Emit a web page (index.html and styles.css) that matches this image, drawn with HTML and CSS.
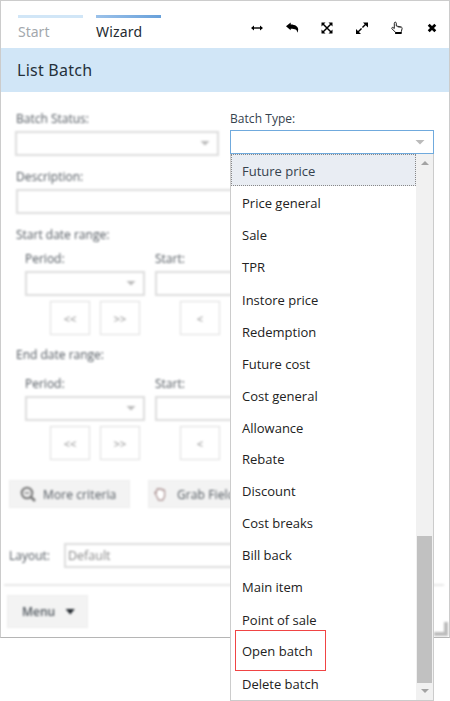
FILE: index.html
```html
<!DOCTYPE html>
<html lang="en">
<head>
<meta charset="utf-8">
<title>List Batch</title>
<link rel="stylesheet" href="styles.css">
</head>
<body>
<main class="panel">
  <header class="topbar">
    <nav class="tabs">
      <span class="tab">Start</span>
      <span class="tab active">Wizard</span>
    </nav>
    <div class="tools">
      <svg viewBox="0 0 14 14"><path d="M3 7h8" stroke="#000" stroke-width="1.4"/><path d="M1 7l3-2.400v4.800zM13 7l-3-2.400v4.800z"/></svg>
      <svg viewBox="0 0 14 14"><path d="M1 5.300L5.700 1.400v2.100c4.700 0 7.500 2.200 7.500 5.100 0 1.300-.4 2.400-1 3.200.1-3.200-2-4-6.500-4v1.500z"/></svg>
      <svg viewBox="0 0 14 14"><path d="M3 3l8 8M11 3l-8 8" stroke="#000" stroke-width="1.500"/><path d="M1.500 1.500h4l-4 4zM12.500 1.500v4l-4-4zM1.500 12.500v-4l4 4zM12.500 12.500h-4l4-4z"/></svg>
      <svg viewBox="0 0 14 14"><path d="M3 11l8-8" stroke="#000" stroke-width="1.400" stroke-dasharray="5 1.300"/><path d="M8 1.500h5v5zM1 8v5h5z"/></svg>
      <svg viewBox="0 0 14 14"><path d="M4.300 7.500V2.200c0-1.400 2-1.400 2 0V5l4.700.9c.9.300 1.200.8 1.100 1.600l-.8 3.200v1.800H5.500v-1.200L2 7.800c-.7-1 .2-1.700 1-1.300zM8.300 5.500v1M10 6v1" fill="none" stroke="#222" stroke-width="1"/><path d="M5.300 11h6v2h-6z"/></svg>
      <svg viewBox="0 0 14 14"><path d="M3.700 3.700l6.600 6.600M10.300 3.700l-6.600 6.600" stroke="#000" stroke-width="2.700"/></svg>
    </div>
  </header>
  <h1 class="title">List Batch</h1>
  <div class="form">
    <section class="status">
      <div class="label">Batch Status:</div>
      <div class="field select"></div>
    </section>
    <section class="description">
      <div class="label">Description:</div>
      <div class="field"></div>
    </section>
    <section class="range">
      <div class="label">Start date range:</div>
      <div class="pair">
        <div class="col">
          <div class="label">Period:</div>
          <div class="field select"></div>
          <div class="steps"><span>&lt;&lt;</span><span>&gt;&gt;</span></div>
        </div>
        <div class="col">
          <div class="label">Start:</div>
          <div class="field"></div>
          <div class="steps"><span>&lt;</span></div>
        </div>
      </div>
    </section>
    <section class="range end">
      <div class="label">End date range:</div>
      <div class="pair">
        <div class="col">
          <div class="label">Period:</div>
          <div class="field select"></div>
          <div class="steps"><span>&lt;&lt;</span><span>&gt;&gt;</span></div>
        </div>
        <div class="col">
          <div class="label">Start:</div>
          <div class="field"></div>
          <div class="steps"><span>&lt;</span></div>
        </div>
      </div>
    </section>
    <div class="actions">
      <div class="button"><svg viewBox="0 0 16 16"><g fill="none" stroke="#777"><circle cx="7" cy="7" r="5.300" stroke-width="2"/><path d="M11 11l4 4" stroke-width="2.500"/><path d="M4.500 7h5" stroke-width="1.300"/></g></svg>More criteria</div>
      <div class="button grab"><svg viewBox="0 0 16 16"><path d="M3.500 9L2 6.500c-.5-1.200.8-1.700 1.700-.5L4 3c.2-1.400 1.700-1.400 2 0 .2-1.700 2-1.700 2.200 0 .5-1.300 2.200-1 2.200.5.700-1 2-.5 2 .7V10l-2 4H6z" fill="#fff" stroke="#a58a8a" stroke-width="1.200"/></svg>Grab Fields</div>
    </div>
    <div class="layout"><span class="label">Layout:</span><div class="field">Default</div></div>
    <hr>
    <div class="button menu">Menu<i></i></div>
  </div>
  <div class="grip"></div>
</main>
<div class="combo">
  <div class="combo-label">Batch Type:</div>
  <div class="combo-field"></div>
  <div class="dropdown">
    <ul>
      <li class="selected">Future price</li>
      <li>Price general</li>
      <li>Sale</li>
      <li>TPR</li>
      <li>Instore price</li>
      <li>Redemption</li>
      <li>Future cost</li>
      <li>Cost general</li>
      <li class="short">Allowance</li>
      <li>Rebate</li>
      <li>Discount</li>
      <li>Cost breaks</li>
      <li>Bill back</li>
      <li>Main item</li>
      <li>Point of sale</li>
      <li class="marked">Open batch</li>
      <li>Delete batch</li>
    </ul>
    <div class="scrollbar"><i class="up"></i><div class="thumb"></div><i class="down"></i></div>
  </div>
</div>
</body>
</html>
```
FILE: styles.css
```css
*, *::before, *::after { box-sizing: border-box; }
body { margin: 0; height: 701px; overflow: hidden; position: relative; background: #fff; font-family: "Open Sans", "Noto Sans", sans-serif; color: #333; }
.panel { position: relative; width: 450px; height: 638px; border: 1px solid #ccc; border-bottom-color: #b5b5b5; overflow: hidden; }
.topbar { height: 47px; display: flex; justify-content: space-between; padding: 14px 10px 0 17px; }
.tabs { display: flex; gap: 13px; }
.tab { width: 65px; height: 28px; border-top: 3px solid #d1e6f7; padding-top: 4px; font-family: "Noto Sans", sans-serif; font-size: 14px; line-height: 20px; color: #a3a8ad; }
.tab.active { color: #252b31; border-image: linear-gradient(90deg, #9cc2ea, #67a0da) 1; letter-spacing: .2px; }
.tools { display: flex; gap: 21px; padding-top: 6px; }
.tools svg { width: 14px; height: 14px; }
.title { margin: 0; height: 44px; padding-left: 16px; background: #d1e6f7; color: #25313b; font-family: "Noto Sans", sans-serif; font-size: 16px; letter-spacing: .25px; font-weight: 400; line-height: 44px; }
.form { padding: 19px 0 0; filter: blur(1.1px); font-size: 12px; color: #50575e; }
.label { height: 16px; line-height: 16px; }
.field { height: 25px; border: 2px solid #ddd; background: #fff; }
.select { display: flex; align-items: center; justify-content: flex-end; padding-right: 7px; }
.select::after { content: ""; width: 10px; height: 5px; background: #bbb; clip-path: polygon(0 0, 100% 0, 50% 100%); }
.status { width: 204px; height: 58px; margin-left: 14px; }
.status .label, .description .label { margin-left: 1px; margin-bottom: 4px; }
.status .field, .pair .field { position: relative; top: -.5px; }
.description { width: 415px; height: 58px; margin-left: 14px; }
.description .field { margin-left: 1px; }
.range { height: 120px; padding-left: 15px; }
.pair { display: flex; gap: 10px; padding: 8px 0 0 9px; }
.col { width: 120px; }
.col .field { margin-top: 4px; }
.steps { display: flex; gap: 10px; margin: 5px 0 0 25px; font-size: 11px; color: #888; }
.steps span { width: 40px; height: 34px; border: 1px solid #ddd; display: grid; place-items: center; }
.end { height: 133px; }
.end .pair { padding-top: 13px; }
.actions { display: flex; gap: 18px; padding-left: 8px; }
.button { display: flex; align-items: center; background: #f3f3f3; border: 1px solid #eee; height: 28px; width: 121px; padding-left: 10px; gap: 7px; font-size: 12px; letter-spacing: .1px; white-space: nowrap; }
.button svg { width: 16px; height: 16px; }
.grab { padding-left: 4px; gap: 9px; }
.grab svg { width: 15px; height: 15px; }
.layout { display: flex; align-items: center; margin: 35px 0 0 8px; }
.layout .label { width: 55px; }
.layout .field { width: 350px; padding-left: 2px; line-height: 22px; font-size: 12.5px; color: #888; }
hr { height: 2px; margin: 16px 5px 0 3px; border: 0; background: #e8e8e8; }
.menu { width: 81px; height: 33px; margin: 9px 0 0 6px; padding-left: 14px; gap: 10px; font-weight: 600; letter-spacing: 0; }
.menu i { width: 10px; height: 6px; background: #252b31; clip-path: polygon(0 0, 100% 0, 50% 100%); }
.grip { position: absolute; right: 1px; bottom: 1px; width: 14px; height: 14px; border: solid #bbb; border-width: 0 4px 4px 0; filter: blur(.8px); }
.combo { position: absolute; left: 230px; top: 110px; width: 204px; }
.combo-label { height: 20px; font-size: 12px; line-height: 17px; letter-spacing: .05px; color: #35424e; }
.combo-field { height: 24px; border: 1px solid #70aadd; background: #fff; display: flex; justify-content: flex-end; align-items: center; padding-right: 8px; }
.combo-field::after { content: ""; width: 10px; height: 5px; background: #bbb; clip-path: polygon(0 0, 100% 0, 50% 100%); }
.dropdown { height: 547px; display: flex; border: 1px solid #ccc; border-top: 0; background: #fff; }
ul { list-style: none; width: 185px; margin: 0; padding: 0; }
li { height: 32.15px; padding-left: 11px; font-size: 13px; line-height: 34px; color: #222; }
li.selected { border: 1px dotted #888; background: #e9edf3; color: #35424e; line-height: 32px; padding-left: 10px; }
li.short { height: 30.8px; }
li.marked { position: relative; line-height: 33px; }
li.marked::before { content: ""; position: absolute; left: 4px; top: -4.500px; width: 91px; height: 41px; border: 1px solid #f04444; }
.scrollbar { width: 17px; background: #f1f1f1; display: flex; flex-direction: column; align-items: center; }
.up { margin-top: 7px; border: 4px solid transparent; border-bottom-color: #a3a3a3; border-top: 0; }
.thumb { width: 15px; height: 147px; margin-top: 371px; background: #c1c1c1; }
.down { margin-top: 6px; border: 4px solid transparent; border-top-color: #a3a3a3; border-bottom: 0; }
```
